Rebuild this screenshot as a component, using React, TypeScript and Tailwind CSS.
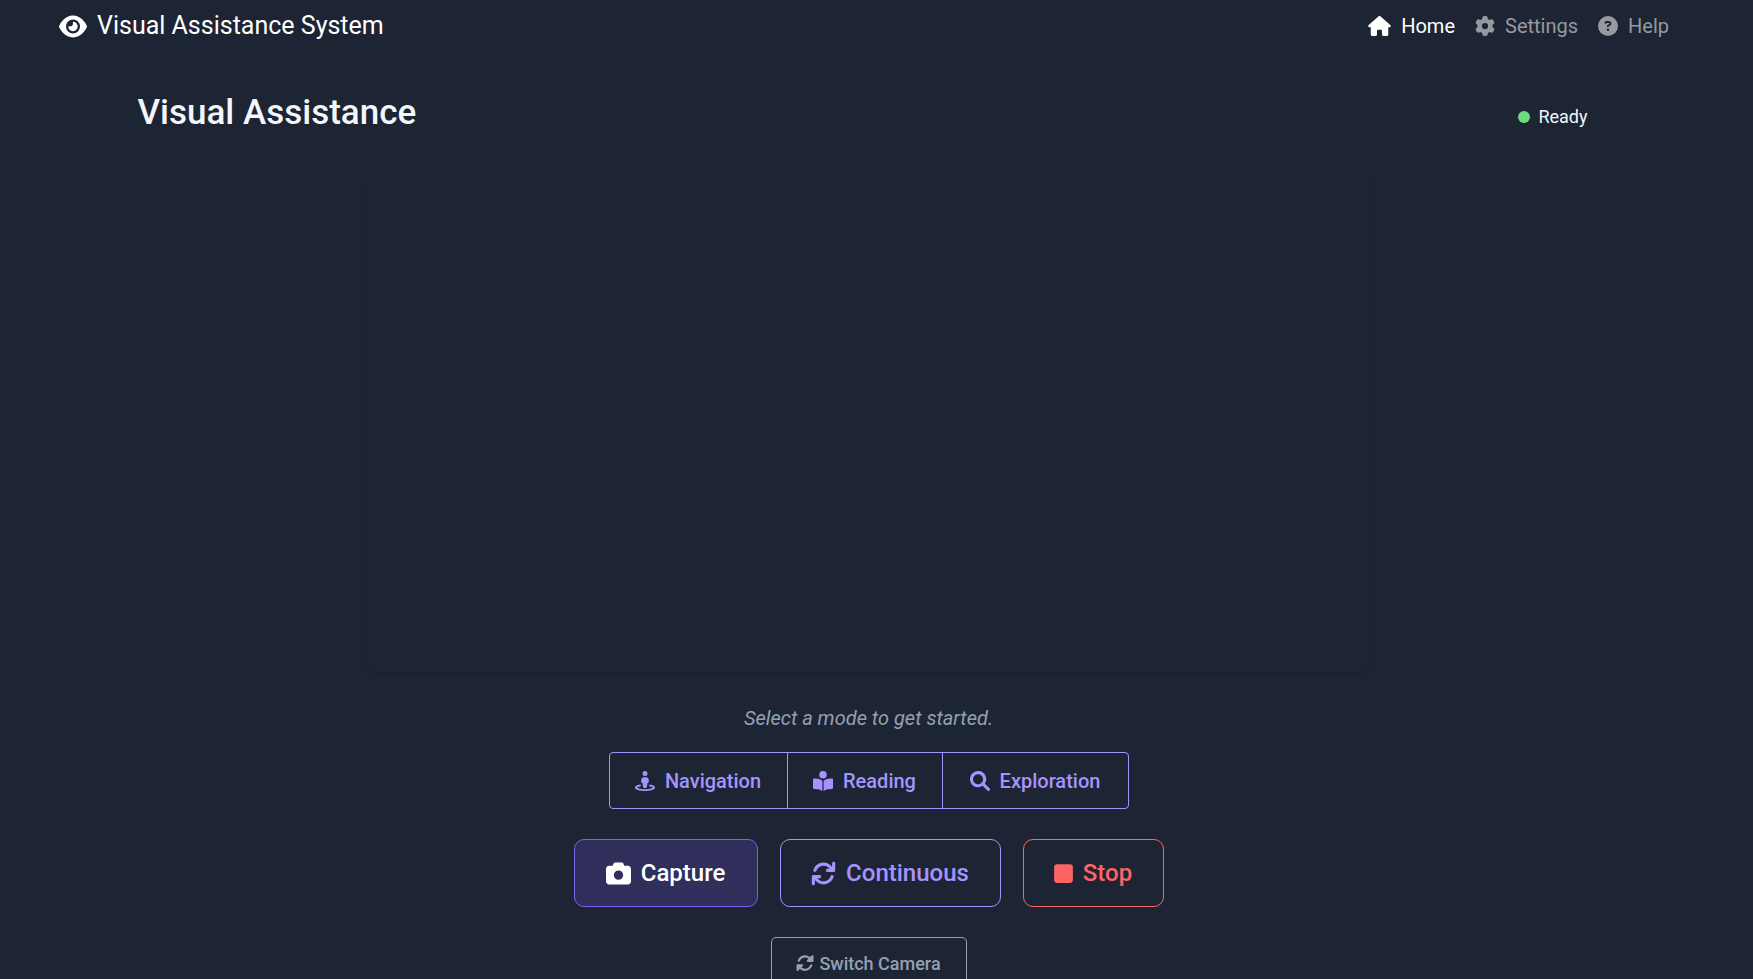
import type { ReactNode } from "react";
import {
  FaBookOpenReader,
  FaCamera,
  FaCircleQuestion,
  FaEye,
  FaGear,
  FaHouse,
  FaStreetView,
} from "react-icons/fa6";

function SearchIcon() {
  return (
    <svg viewBox="0 0 512 512" className="size-5 fill-current" aria-hidden="true">
      <path d="M500.3 443.7l-119.7-119.7c27.22-40.41 40.65-90.9 33.46-144.7C401.8 87.79 326.8 13.32 235.2 1.723C99.01-15.51-15.51 99.01 1.724 235.2c11.6 91.64 86.08 166.7 177.6 178.9c53.8 7.189 104.3-6.236 144.7-33.46l119.7 119.7c15.62 15.62 40.95 15.62 56.57 0C515.9 484.7 515.9 459.3 500.3 443.7zM79.1 208c0-70.58 57.42-128 128-128s128 57.42 128 128c0 70.58-57.42 128-128 128S79.1 278.6 79.1 208z" />
    </svg>
  );
}

function ArrowsIcon() {
  return (
    <svg viewBox="0 0 512 512" className="size-[25px] fill-current" aria-hidden="true">
      <path d="M464 16c-17.67 0-32 14.31-32 32v74.09C392.1 66.52 327.4 32 256 32C161.5 32 78.59 92.34 49.58 182.2c-5.438 16.81 3.797 34.88 20.61 40.28c16.89 5.5 34.88-3.812 40.3-20.59C130.9 138.5 189.4 96 256 96c50.5 0 96.26 24.55 124.4 64H336c-17.67 0-32 14.31-32 32s14.33 32 32 32h128c17.67 0 32-14.31 32-32V48C496 30.31 481.7 16 464 16zM441.8 289.6c-16.92-5.438-34.88 3.812-40.3 20.59C381.1 373.5 322.6 416 256 416c-50.5 0-96.25-24.55-124.4-64H176c17.67 0 32-14.31 32-32s-14.33-32-32-32h-128c-17.67 0-32 14.31-32 32v144c0 17.69 14.33 32 32 32s32-14.31 32-32v-74.09C119.9 445.5 184.6 480 256 480c94.45 0 177.4-60.34 206.4-150.2C467.9 313 458.6 294.1 441.8 289.6z" />
    </svg>
  );
}

function RotateIcon() {
  return (
    <svg viewBox="0 0 512 512" className="size-[18px] fill-current" aria-hidden="true">
      <path d="M449.9 39.96l-48.5 48.53C362.5 53.19 311.4 32 256 32C161.5 32 78.59 92.34 49.58 182.2c-5.438 16.81 3.797 34.88 20.61 40.28c16.97 5.5 34.86-3.812 40.3-20.59C130.9 138.5 189.4 96 256 96c37.96 0 73 14.18 100.2 37.8L311.1 178C295.1 194.8 306.8 223.4 330.4 224h146.2C488.5 224 498 214.5 498 202.7V59.03C498 35.4 467.5 22.9 449.9 39.96zM441.8 289.6c-16.94-5.438-34.88 3.812-40.3 20.59C381.1 373.5 322.6 416 256 416c-37.96 0-73-14.18-100.2-37.8L200 334C216.9 317.2 205.2 288.6 181.6 288H35.47C23.5 288 14 297.5 14 309.3v144.7c0 23.6 30.5 36.1 48.1 19l48.5-48.5C149.5 458.8 200.6 480 255.1 480c94.45 0 177.4-60.34 206.4-150.2C467.8 313 458.6 294.1 441.8 289.6z" />
    </svg>
  );
}

function StopIcon() {
  return (
    <svg viewBox="0 0 384 512" className="h-[25px] w-[19px] fill-current" aria-hidden="true">
      <rect x="0" y="64" width="384" height="384" rx="64" />
    </svg>
  );
}

function NavLink({ icon, label, active = false }: { icon: ReactNode; label: string; active?: boolean }) {
  return (
    <a
      href="#"
      aria-current={active ? "page" : undefined}
      className={`flex items-center gap-2.5 px-2.5 text-[20px] leading-[30px] ${active ? "text-white" : "text-[#96999f]"}`}
    >
      {icon}
      {label}
    </a>
  );
}

function ModeButton({ icon, label, className }: { icon: ReactNode; label: string; className: string }) {
  return (
    <button
      type="button"
      className={`flex h-[57px] items-center justify-center gap-2.5 border border-[#a594ff] px-6 text-[20px] font-medium text-[#a594ff] ${className}`}
    >
      {icon}
      {label}
    </button>
  );
}

function ActionButton({ icon, label, className }: { icon: ReactNode; label: string; className: string }) {
  return (
    <button
      type="button"
      className={`flex h-[68px] items-center justify-center gap-2.5 rounded-[10px] border px-7 text-[24px] font-medium ${className}`}
    >
      {icon}
      {label}
    </button>
  );
}

export default function App() {
  return (
    <div className="h-screen overflow-hidden bg-[#1d2433] pr-4 font-['Roboto','Liberation_Sans',sans-serif]">
      <nav className="flex h-[52px] items-center justify-between pr-[58px] pl-[59px]">
        <a href="#" className="flex items-center gap-2.5 text-[25px] leading-[38px] text-white">
          <FaEye className="h-[25px] w-[28px]" />
          Visual Assistance System
        </a>
        <div className="flex items-center">
          <NavLink active icon={<FaHouse className="h-5 w-[23px]" />} label="Home" />
          <NavLink icon={<FaGear className="size-5" />} label="Settings" />
          <NavLink icon={<FaCircleQuestion className="size-5" />} label="Help" />
        </div>
      </nav>

      <main className="mx-auto max-w-[1462px] pt-10">
        <header className="flex items-center justify-between">
          <h1 className="text-[35px] leading-[42px] font-medium text-[#f3f6fa]">Visual Assistance</h1>
          <div role="status" className="flex items-center gap-2 pt-2 pr-3 text-[18px] leading-[26px] text-[#f3f6fa]">
            <span className="size-3 rounded-full bg-[#6bdb7d]" />
            Ready
          </div>
        </header>

        <section
          aria-label="Camera preview"
          className="mx-auto mt-[38px] h-[500px] max-w-[1000px] rounded-[10px] shadow-[0_4px_6px_rgba(0,0,0,0.1)]"
        />

        <div className="flex flex-col items-center">
          <p className="mt-[31px] text-[20px] leading-[30px] text-[#94a0b3] italic">Select a mode to get started.</p>

          <div role="group" aria-label="Mode" className="mt-[19px] flex">
            <ModeButton className="min-w-[179px] rounded-l-[4px]" icon={<FaStreetView className="size-5" />} label="Navigation" />
            <ModeButton className="-ml-px min-w-[156px]" icon={<FaBookOpenReader className="size-5" />} label="Reading" />
            <ModeButton className="-ml-px min-w-[187px] rounded-r-[4px]" icon={<SearchIcon />} label="Exploration" />
          </div>

          <div className="mt-[30px] flex gap-[22px]">
            <ActionButton
              className="min-w-[184px] border-[#7a60f5] bg-[#302f5b] text-white"
              icon={<FaCamera className="size-[25px]" />}
              label="Capture"
            />
            <ActionButton
              className="min-w-[221px] border-[#a594ff] text-[#a594ff]"
              icon={<ArrowsIcon />}
              label="Continuous"
            />
            <ActionButton
              className="min-w-[141px] border-[#ff6464] text-[#ff6464]"
              icon={<StopIcon />}
              label="Stop"
            />
          </div>

          <button
            type="button"
            className="mt-[30px] flex h-[52px] min-w-[196px] items-center justify-center gap-[5px] rounded-[5px] border border-[#94a0b3] px-6 text-[18px] font-medium text-[#94a0b3]"
          >
            <RotateIcon />
            Switch Camera
          </button>
        </div>
      </main>
    </div>
  );
}
